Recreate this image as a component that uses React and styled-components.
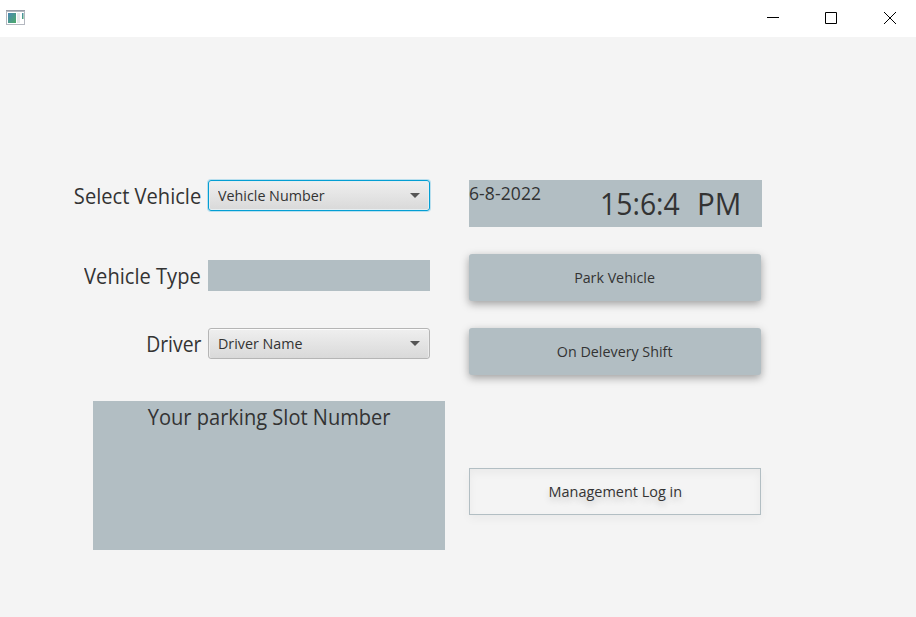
import React from "react";
import styled, { createGlobalStyle } from "styled-components";

const GlobalStyle = createGlobalStyle`
  * { box-sizing: border-box; }
  body {
    margin: 0;
    background: #f4f4f4;
    font-family: "Segoe UI", "Open Sans", "Noto Sans", sans-serif;
    color: #333;
  }
`;

const Window = styled.div`
  width: 916px;
  height: 617px;
  display: flex;
  flex-direction: column;
  overflow: hidden;
  background: #f4f4f4;
`;

const TitleBar = styled.header`
  display: flex;
  justify-content: space-between;
  height: 37px;
  flex: none;
  background: #fff;
`;

const AppIcon = styled.svg`
  width: 19px;
  height: 15px;
  margin: 10px 0 0 6px;
`;

const WindowControls = styled.div`
  display: flex;
  padding: 12px 20px 0 0;
`;

const ControlGlyph = styled.svg`
  width: 12px;
  height: 12px;
  margin-left: ${(p) => p.$before || 0}px;
  fill: none;
  stroke: #000;
`;

const Content = styled.main`
  display: grid;
  grid-template-columns: 371px 293px;
  column-gap: 24px;
  padding: 143px 0 0 74px;
`;

const Column = styled.section`
  display: flex;
  flex-direction: column;
`;

const Field = styled.div`
  display: grid;
  grid-template-columns: 127px 222px;
  column-gap: 7px;
  align-items: center;
  height: 31px;
  margin-bottom: ${(p) => p.$after}px;
`;

/* Slightly condensed text; $from is the edge that stays in place. */
const Text = styled.span`
  display: inline-block;
  font-size: ${(p) => p.$size}px;
  transform: scaleX(${(p) => p.$condense || 1});
  transform-origin: ${(p) => p.$from || "center"};
  letter-spacing: ${(p) => p.$tracking || 0}px;
  line-height: 1.36;
  white-space: pre;
`;

const FieldLabel = styled.label`
  justify-self: end;
  display: flex;
`;

const Select = styled.button`
  display: flex;
  align-items: center;
  justify-content: space-between;
  width: 222px;
  height: 31px;
  padding: 0 9px;
  border: 1px solid ${(p) => (p.$focused ? "#039ed3" : "#b5b5b5")};
  border-radius: 3px;
  background: linear-gradient(#efefef, #d9d9d9);
  box-shadow: ${(p) =>
    p.$focused
      ? "0 0 0 1px #b9dfee, inset 0 0 0 1px #e6eef1"
      : "inset 0 1px 0 #fbfbfb, inset 1px 0 0 #ececec, inset -1px 0 0 #ececec"};
  font-family: inherit;
  color: #333;
`;

const Arrow = styled.svg`
  width: 10px;
  height: 5px;
  fill: #555;
`;

const TypeValue = styled.output`
  height: 31px;
  background: #b2bec3;
`;

const SlotPanel = styled.div`
  width: 352px;
  height: 149px;
  margin-left: 19px;
  padding-top: 1px;
  display: flex;
  justify-content: center;
  background: #b2bec3;
`;

const Clock = styled.div`
  display: flex;
  align-items: flex-start;
  height: 47px;
  margin-bottom: 27px;
  background: #b2bec3;
`;

const DateText = styled.div`
  width: 131px;
  display: flex;
  padding-top: 2px;
`;

const TimeText = styled.div`
  display: flex;
  gap: 11px;
  padding-top: 3px;
`;

const Button = styled.button`
  width: 292px;
  height: 47px;
  padding: 0;
  border: 0;
  border-radius: 3px;
  background: #b2bec3;
  box-shadow: 0 3px 9px rgba(0, 0, 0, 0.35);
  margin-bottom: ${(p) => p.$after || 0}px;
  font-family: inherit;
  color: #333;
`;

const OutlineButton = styled(Button)`
  border: 1px solid #b2bec3;
  border-radius: 0;
  background: transparent;
  box-shadow: 0 4px 9px rgba(0, 0, 0, 0.045), inset 0 4px 9px rgba(0, 0, 0, 0.045);
  text-shadow: 0 4px 8px rgba(0, 0, 0, 0.2);
`;

function Dropdown({ children, focused }) {
  return (
    <Select type="button" $focused={focused}>
      <Text $size={15} $condense={0.953} $from="left">{children}</Text>
      <Arrow viewBox="0 0 10 5"><path d="M0 0h10L5 5z" /></Arrow>
    </Select>
  );
}

export default function App() {
  return (
    <Window>
      <GlobalStyle />
      <TitleBar>
        <AppIcon viewBox="0 0 19 15">
          <defs>
            <linearGradient id="pane" x1="0" y1="0" x2="1" y2="1">
              <stop offset="0" stopColor="#4a87b5" />
              <stop offset="1" stopColor="#4caa68" />
            </linearGradient>
          </defs>
          <path fill="#b4b8c0" d="M0 0h19v15H0z" />
          <path fill="#989ca6" d="M0 0h19v1H0z" />
          <path fill="#fff" d="M1 2h17v12H1z" />
          <path fill="url(#pane)" d="M2 3h8v10H2z" />
          <path fill="#e7e9eb" d="M11 3h3v10h-3z" />
          <path fill="url(#pane)" d="M16 3h1.5v6H16z" />
        </AppIcon>
        <WindowControls>
          <ControlGlyph viewBox="0 0 12 12"><path d="M0 5.5h12" /></ControlGlyph>
          <ControlGlyph $before={46} viewBox="0 0 12 12"><path d="M.5.5h11v11H.5z" /></ControlGlyph>
          <ControlGlyph $before={47} viewBox="0 0 12 12"><path d="M0 0l12 12M12 0L0 12" /></ControlGlyph>
        </WindowControls>
      </TitleBar>
      <Content>
        <Column>
          <Field $after={49}>
            <FieldLabel><Text $size={21.5} $condense={0.935} $from="right">Select Vehicle</Text></FieldLabel>
            <Dropdown focused>Vehicle Number</Dropdown>
          </Field>
          <Field $after={37}>
            <FieldLabel><Text $size={21.5} $condense={0.935} $from="right">Vehicle Type</Text></FieldLabel>
            <TypeValue />
          </Field>
          <Field $after={42}>
            <FieldLabel><Text $size={21.5} $condense={0.9} $from="right">Driver</Text></FieldLabel>
            <Dropdown>Driver Name</Dropdown>
          </Field>
          <SlotPanel><Text $size={21.5} $condense={0.933}>Your parking Slot Number</Text></SlotPanel>
        </Column>
        <Column>
          <Clock>
            <DateText><Text $size={17.5} $tracking={0.1}>6-8-2022</Text></DateText>
            <TimeText>
              <Text $size={30.5} $condense={0.93} $from="left">15:6:4</Text>
              <Text $size={30.5} $condense={0.97} $from="left">PM</Text>
            </TimeText>
          </Clock>
          <Button type="button" $after={27}><Text $size={15} $condense={0.95}>Park Vehicle</Text></Button>
          <Button type="button" $after={93}><Text $size={15} $condense={0.953}>On Delevery Shift</Text></Button>
          <OutlineButton type="button"><Text $size={15} $condense={0.963}>Management Log in</Text></OutlineButton>
        </Column>
      </Content>
    </Window>
  );
}
